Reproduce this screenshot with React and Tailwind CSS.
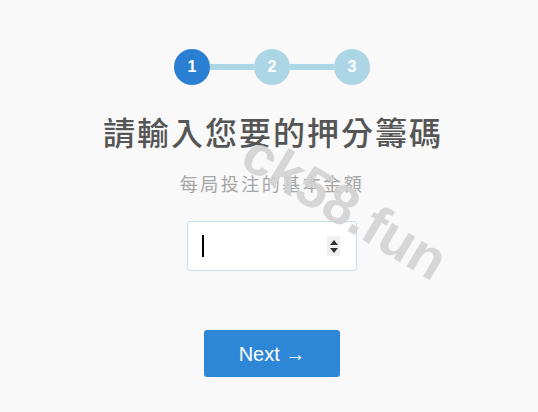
import React from "react";

const Step = ({ n, active }) => (
  <div
    className={
      "flex h-[36px] w-[36px] items-center justify-center rounded-full text-[16px] font-bold text-white " +
      (active ? "bg-[#2a7fd3]" : "bg-[#acd6e6]")
    }
  >
    {n}
  </div>
);

const Bar = () => <div className="h-[6px] w-[44px] bg-[#acd6e6]" />;

export default function App() {
  return (
    <div className="relative h-[412px] w-[538px] overflow-hidden bg-[#f9f9f9] font-['Liberation_Sans','Noto_Sans_CJK_TC',sans-serif]">
      <div className="flex flex-col items-center pl-[6px] pt-[49px]">
        <div className="flex items-center">
          <Step n="1" active />
          <Bar />
          <Step n="2" />
          <Bar />
          <Step n="3" />
        </div>

        <h1 className="mt-[29px] pl-[2px] text-[32px] font-medium leading-[40px] tracking-[2px] text-[#555555]">
          請輸入您要的押分籌碼
        </h1>
        <p className="mt-[19px] text-[18px] leading-[24px] tracking-[2.5px] text-[#a5a5a5]">
          每局投注的基本金額
        </p>

        <div className="mt-[24px] flex h-[50px] w-[170px] items-center justify-between rounded-[3px] border border-[#c6e0ee] bg-white pl-[14px] pr-[16px]">
          <span className="h-[22px] w-[1.5px] bg-black" />
          <span className="flex h-[20px] w-[13px] flex-col items-center justify-center gap-[3px] bg-[#f0f0f0]">
            <span className="h-0 w-0 border-x-[4px] border-b-[5px] border-x-transparent border-b-[#333]" />
            <span className="h-0 w-0 border-x-[4px] border-t-[5px] border-x-transparent border-t-[#333]" />
          </span>
        </div>

        <button className="mt-[59px] flex h-[47px] w-[136px] items-center justify-center rounded-[3px] bg-[#2e86d6] text-[20px] text-white">
          Next →
        </button>
      </div>

      <div className="pointer-events-none absolute left-[345px] top-[207px] -translate-x-1/2 -translate-y-1/2 rotate-[31deg] whitespace-nowrap text-[56px] font-bold leading-none text-[#d2d2d2]/90">
        ck58.fun
      </div>
    </div>
  );
}
